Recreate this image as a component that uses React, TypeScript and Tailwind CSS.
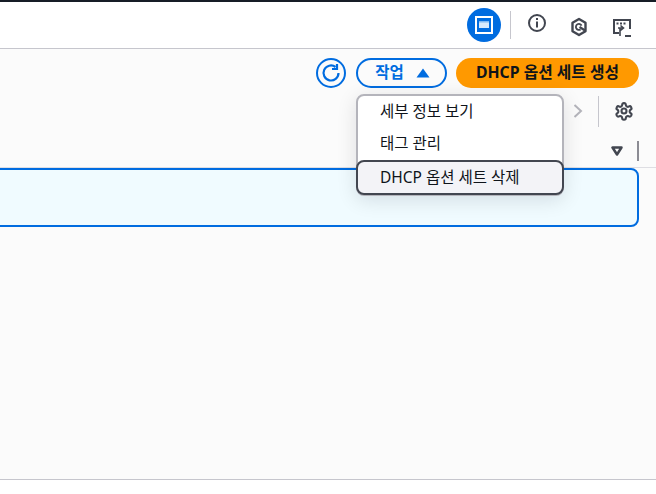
import React from 'react';

const fontStack = { fontFamily: '"Noto Sans", "Noto Sans CJK KR", sans-serif' };

function Header() {
  return (
    <header className="flex h-[46px] items-center justify-end bg-white pr-[24px]">
      <button className="flex h-[34px] w-[34px] items-center justify-center rounded-full bg-[#006ce0]">
        <svg width="18" height="18" viewBox="0 0 18 18" fill="none">
          <rect x="1" y="1" width="16" height="16" stroke="#fff" strokeWidth="2" />
          <rect x="4" y="5" width="10" height="7" fill="#d6e9fc" />
          <rect x="4" y="5" width="10" height="1.5" fill="#7db8f2" />
        </svg>
      </button>
      <div className="ml-[9px] h-[28px] w-px bg-[#c6c6cd]" />
      <div className="ml-[16px] mb-[4px]">
        <svg width="20" height="20" viewBox="0 0 20 20" fill="none">
          <circle cx="10" cy="10" r="8" stroke="#424650" strokeWidth="2" />
          <rect x="9" y="8.5" width="2" height="6" fill="#424650" />
          <rect x="9" y="5" width="2" height="2" fill="#424650" />
        </svg>
      </div>
      <div className="ml-[23px] mt-[4px]">
        <svg width="18" height="20" viewBox="0 0 18 20" fill="none">
          <path d="M9 2 L15.5 5.8 V14.2 L9 18 L2.5 14.2 V5.8 Z" stroke="#424650" strokeWidth="2.4" strokeLinejoin="round" />
          <path d="M11.6 8.6 A3 3 0 1 0 10.6 12.4" stroke="#424650" strokeWidth="1.8" />
          <path d="M9.5 10 L15 13.5" stroke="#424650" strokeWidth="2.2" />
        </svg>
      </div>
      <div className="ml-[24px] mt-[6px]">
        <svg width="20" height="20" viewBox="0 0 20 20" fill="none">
          <path d="M7 15 H2 V2 H18 V11" stroke="#424650" strokeWidth="2" />
          <rect x="4.5" y="4.5" width="2" height="2" fill="#424650" />
          <rect x="8" y="4.5" width="2" height="2" fill="#424650" />
          <rect x="11.5" y="4.5" width="2" height="2" fill="#424650" />
          <path d="M6 10 H11 M8.5 7.5 L11.5 10 L8.5 12.5 M8 10 V18" stroke="#424650" strokeWidth="1.6" />
          <rect x="13" y="17" width="6" height="2" fill="#424650" />
        </svg>
      </div>
    </header>
  );
}

function ActionsMenu() {
  return (
    <div className="absolute left-[356px] top-[45px] z-10 h-[102px] w-[208px] rounded-lg border-2 border-[#b4b4bb] bg-white text-[15.5px] text-[#0f141a] shadow-[0_4px_20px_rgba(0,7,22,0.12)]">
      <div className="flex h-[31px] items-center pl-[22px]">세부 정보 보기</div>
      <div className="flex h-[33px] items-center pl-[22px]">태그 관리</div>
      <div className="-mx-[2px] flex h-[35px] items-center rounded-lg border-2 border-[#424650] bg-[#f3f3f7] pl-[22px]">
        DHCP 옵션 세트 삭제
      </div>
    </div>
  );
}

function Toolbar() {
  return (
    <div className="flex h-[30px] items-center justify-end gap-[10px] pr-[17px]">
      <button className="flex h-[30px] w-[30px] items-center justify-center rounded-full border-2 border-[#006ce0]">
        <svg width="20" height="20" viewBox="0 0 20 20" fill="none">
          <path d="M17.5 10 A7.5 7.5 0 1 1 14.5 4" stroke="#006ce0" strokeWidth="2.2" />
          <path d="M16 1 V6 H11" stroke="#006ce0" strokeWidth="2.2" />
        </svg>
      </button>
      <button className="flex h-[30px] w-[91px] items-center justify-center gap-[12px] rounded-full border-2 border-[#006ce0] pl-[2px] text-[15.5px] font-bold text-[#006ce0]">
        작업
        <svg width="14" height="10" viewBox="0 0 14 10">
          <path d="M7 0.5 L13.5 9.5 H0.5 Z" fill="#006ce0" />
        </svg>
      </button>
      <button className="ml-[-1px] h-[30px] w-[183px] rounded-full bg-[#ff9900] text-[15.8px] font-bold text-[#0f141a]">
        DHCP 옵션 세트 생성
      </button>
    </div>
  );
}

function TableTools() {
  return (
    <div className="mt-[6px] flex h-[34px] items-center justify-end pr-[22px]">
      <svg width="10" height="16" viewBox="0 0 10 16" fill="none">
        <path d="M1.5 2 L8 8 L1.5 14" stroke="#b4b4bb" strokeWidth="2" />
      </svg>
      <div className="ml-[15px] h-[31px] w-px bg-[#c6c6cd]" />
      <svg className="ml-[15px]" width="20" height="20" viewBox="0 0 24 24" fill="none" stroke="#424650" strokeWidth="2.5" strokeLinejoin="round">
        <path d="M12.2 2.5h-.4a2 2 0 0 0-2 2v.2a2 2 0 0 1-1 1.7l-.4.3a2 2 0 0 1-2 0l-.2-.1a2 2 0 0 0-2.7.7l-.2.4a2 2 0 0 0 .7 2.7l.2.1a2 2 0 0 1 1 1.7v.6a2 2 0 0 1-1 1.7l-.2.1a2 2 0 0 0-.7 2.7l.2.4a2 2 0 0 0 2.7.7l.2-.1a2 2 0 0 1 2 0l.4.3a2 2 0 0 1 1 1.7v.2a2 2 0 0 0 2 2h.4a2 2 0 0 0 2-2v-.2a2 2 0 0 1 1-1.7l.4-.3a2 2 0 0 1 2 0l.2.1a2 2 0 0 0 2.7-.7l.2-.4a2 2 0 0 0-.7-2.7l-.2-.1a2 2 0 0 1-1-1.7v-.6a2 2 0 0 1 1-1.7l.2-.1a2 2 0 0 0 .7-2.7l-.2-.4a2 2 0 0 0-2.7-.7l-.2.1a2 2 0 0 1-2 0l-.4-.3a2 2 0 0 1-1-1.7v-.2a2 2 0 0 0-2-2z" />
        <circle cx="12" cy="12" r="3" />
      </svg>
    </div>
  );
}

function TableHead() {
  return (
    <div className="mt-[13px] flex h-[27px] items-center justify-end border-b border-[#dedee3] pb-[6px] pr-[17px]">
      <svg width="12" height="10" viewBox="0 0 12 10" fill="none">
        <path d="M1.5 1.5 H10.5 L6 8.5 Z" stroke="#424650" strokeWidth="2.5" strokeLinejoin="round" />
      </svg>
      <div className="ml-[14px] h-[20px] w-[2px] bg-[#8c8c94]" />
    </div>
  );
}

export default function App() {
  return (
    <div className="flex h-[494px] w-[656px] flex-col overflow-hidden bg-white" style={fontStack}>
      <div className="h-[2px] bg-[#161d26]" />
      <Header />
      <main className="relative h-[431px] border-t border-[#c6c6cd] bg-[#fbfbfb] pt-[9px]">
        <Toolbar />
        <TableTools />
        <TableHead />
        <div className="-ml-[10px] mr-[17px] h-[59px] rounded-lg border-2 border-[#006ce0] bg-[#f0fbff]" />
        <ActionsMenu />
      </main>
      <div className="h-[15px] border-t border-[#c6c6cd] bg-white" />
    </div>
  );
}
